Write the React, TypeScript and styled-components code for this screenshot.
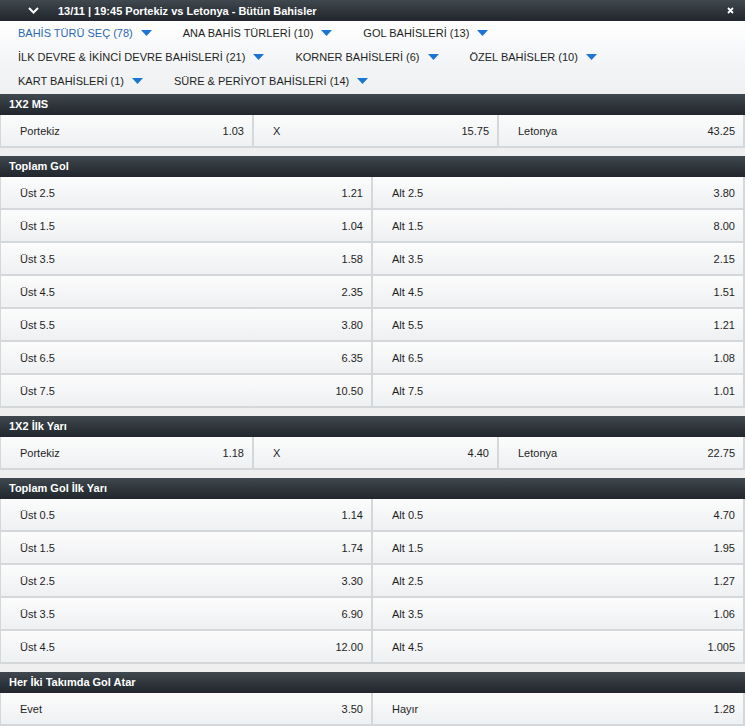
import { FC } from 'react'
import styled, { createGlobalStyle } from 'styled-components'

const GlobalStyle = createGlobalStyle`
  body {
    margin: 0;
    background: #efefef;
    font-family: 'Liberation Sans', Arial, sans-serif;
    color: #222;
  }
`

const Page = styled.div`
  width: 745px;
`

const darkBar = `
  background: linear-gradient(to bottom, #414950 0%, #2d343a 55%, #21272d 100%);
  color: #fff;
  font-weight: bold;
  font-size: 11px;
`

const TitleBar = styled.div`
  ${darkBar}
  height: 21px;
  display: flex;
  align-items: center;
  padding: 0 11px 0 28px;
`

const Chevron = styled.svg`
  width: 11px;
  height: 7px;
  margin-right: 19px;
`

const Title = styled.span`
  flex: 1;
`

const CloseIcon = styled.svg`
  width: 7px;
  height: 7px;
`

const FilterPanel = styled.div`
  background: linear-gradient(to bottom, #ffffff 0%, #f3f4f6 60%, #eff1f3 100%);
  padding: 0 0 1px 18px;
`

const FilterRow = styled.div`
  display: flex;
  align-items: center;
  gap: 31px;
  height: 24px;
`

const FilterItem = styled.div<{ $active?: boolean }>`
  display: flex;
  align-items: center;
  gap: 8px;
  font-size: 11px;
  color: ${(p) => (p.$active ? '#2a68b4' : '#1d1f22')};
  white-space: nowrap;
`

const Caret = styled.svg`
  width: 11px;
  height: 6px;
`

const Market = styled.section`
  margin-bottom: 8px;
`

const MarketHeader = styled.div`
  ${darkBar}
  height: 21px;
  line-height: 21px;
  padding-left: 9px;
`

const OddsGrid = styled.div<{ $cols: string }>`
  display: grid;
  grid-template-columns: ${(p) => p.$cols};
  gap: 2px;
  padding: 0 2px 2px 1px;
  background: #d4d8db;
`

const Cell = styled.div`
  height: 31px;
  display: flex;
  align-items: center;
  justify-content: space-between;
  padding: 0 8px 0 19px;
  background: linear-gradient(to bottom, #fcfcfc 0%, #f5f6f7 50%, #eff0f1 100%);
  font-size: 11px;
  color: #1f1f1f;
`

type Odd = [string, string]

type MarketData = {
  title: string
  cols: string
  cells: Odd[]
}

const overUnder = (pairs: [string, string, string][]): Odd[] =>
  pairs.flatMap(([line, over, under]) => [
    [`Üst ${line}`, over],
    [`Alt ${line}`, under],
  ] as Odd[])

const markets: MarketData[] = [
  {
    title: '1X2 MS',
    cols: '251fr 243fr 244fr',
    cells: [
      ['Portekiz', '1.03'],
      ['X', '15.75'],
      ['Letonya', '43.25'],
    ],
  },
  {
    title: 'Toplam Gol',
    cols: '1fr 1fr',
    cells: overUnder([
      ['2.5', '1.21', '3.80'],
      ['1.5', '1.04', '8.00'],
      ['3.5', '1.58', '2.15'],
      ['4.5', '2.35', '1.51'],
      ['5.5', '3.80', '1.21'],
      ['6.5', '6.35', '1.08'],
      ['7.5', '10.50', '1.01'],
    ]),
  },
  {
    title: '1X2 İlk Yarı',
    cols: '251fr 243fr 244fr',
    cells: [
      ['Portekiz', '1.18'],
      ['X', '4.40'],
      ['Letonya', '22.75'],
    ],
  },
  {
    title: 'Toplam Gol İlk Yarı',
    cols: '1fr 1fr',
    cells: overUnder([
      ['0.5', '1.14', '4.70'],
      ['1.5', '1.74', '1.95'],
      ['2.5', '3.30', '1.27'],
      ['3.5', '6.90', '1.06'],
      ['4.5', '12.00', '1.005'],
    ]),
  },
  {
    title: 'Her İki Takımda Gol Atar',
    cols: '1fr 1fr',
    cells: [
      ['Evet', '3.50'],
      ['Hayır', '1.28'],
    ],
  },
]

const filterRows: { label: string; active?: boolean }[][] = [
  [
    { label: 'BAHİS TÜRÜ SEÇ (78)', active: true },
    { label: 'ANA BAHİS TÜRLERİ (10)' },
    { label: 'GOL BAHİSLERİ (13)' },
  ],
  [
    { label: 'İLK DEVRE & İKİNCİ DEVRE BAHİSLERİ (21)' },
    { label: 'KORNER BAHİSLERİ (6)' },
    { label: 'ÖZEL BAHİSLER (10)' },
  ],
  [{ label: 'KART BAHİSLERİ (1)' }, { label: 'SÜRE & PERİYOT BAHİSLERİ (14)' }],
]

const DownCaret = () => (
  <Caret viewBox="0 0 11 6">
    <polygon points="0,0 11,0 5.5,6" fill="#1a76d2" />
  </Caret>
)

const MarketBlock: FC<{ market: MarketData }> = ({ market }) => (
  <Market>
    <MarketHeader>{market.title}</MarketHeader>
    <OddsGrid $cols={market.cols}>
      {market.cells.map(([label, odd], i) => (
        <Cell key={i}>
          <span>{label}</span>
          <span>{odd}</span>
        </Cell>
      ))}
    </OddsGrid>
  </Market>
)

export default function App() {
  return (
    <Page>
      <GlobalStyle />
      <TitleBar>
        <Chevron viewBox="0 0 11 7">
          <polyline points="1,1 5.5,5.5 10,1" fill="none" stroke="#fff" strokeWidth="2" />
        </Chevron>
        <Title>13/11 | 19:45 Portekiz vs Letonya - Bütün Bahisler</Title>
        <CloseIcon viewBox="0 0 7 7">
          <path d="M1 1L6 6M6 1L1 6" stroke="#fff" strokeWidth="1.8" />
        </CloseIcon>
      </TitleBar>
      <FilterPanel>
        {filterRows.map((row, r) => (
          <FilterRow key={r}>
            {row.map((item) => (
              <FilterItem key={item.label} $active={item.active}>
                {item.label}
                <DownCaret />
              </FilterItem>
            ))}
          </FilterRow>
        ))}
      </FilterPanel>
      {markets.map((m) => (
        <MarketBlock key={m.title} market={m} />
      ))}
    </Page>
  )
}
